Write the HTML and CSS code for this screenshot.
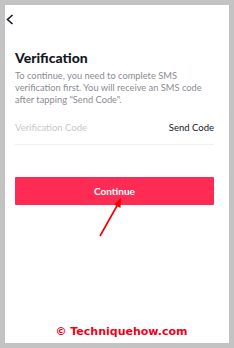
FILE: index.html
```html
<!DOCTYPE html>
<html>
<head>
<meta charset="utf-8">
<link rel="stylesheet" href="styles.css">
</head>
<body>
<div class="frame">
  <div class="screen">
    <div class="topbar">
      <svg class="back" width="8" height="11" viewBox="0 0 8 11"><path d="M6.5 1 L1.5 5.5 L6.5 10" fill="none" stroke="#161823" stroke-width="1.6"/></svg>
    </div>
    <h1 class="title">Verification</h1>
    <p class="desc">To continue, you need to complete SMS verification first. You will receive an SMS code after tapping "Send Code".</p>
    <div class="field">
      <span class="placeholder">Verification Code</span>
      <span class="send">Send Code</span>
    </div>
    <div class="btn">Continue</div>
    <svg class="arrow" width="30" height="44" viewBox="0 0 30 44">
      <line x1="4" y1="41" x2="22" y2="9" stroke="#f00000" stroke-width="1.6"/>
      <polygon points="25,3 24.5,13 18,9.5" fill="#f00000"/>
    </svg>
    <div class="spacer"></div>
    <div class="mark">© Techniquehow.com</div>
  </div>
</div>
</body>
</html>
```
FILE: styles.css
```css
html, body { margin: 0; padding: 0; }
body { width: 234px; height: 348px; background: #c3c3c3; overflow: hidden; }
.frame { padding: 5px; height: 348px; box-sizing: border-box; }
.screen { background: #fff; height: 338px; width: 224px; display: flex; flex-direction: column; position: relative; font-family: "Lato", "Liberation Sans", sans-serif; }
.topbar { height: 30px; padding: 9px 0 0 1px; box-sizing: border-box; }
.back { display: block; }
.title { margin: 15px 0 0 10px; font-weight: 900; font-size: 14px; line-height: 16px; color: #161823; letter-spacing: 0; }
.desc { margin: 4px 0 0 10px; width: 200px; font-size: 9.3px; line-height: 12px; color: #8a8b91; }
.field { margin: 16px 15px 0 10px; height: 22px; display: flex; justify-content: space-between; align-items: flex-start; border-bottom: 1px solid #efefef; font-size: 9.5px; line-height: 12px; }
.placeholder { color: #c7c8cb; }
.send { color: #161823; }
.btn { margin: 32px 15px 0 10px; height: 28px; background: #fe2c55; color: #fff; font-weight: 700; font-size: 10px; display: flex; align-items: center; justify-content: center; border-radius: 1px; }
.arrow { position: absolute; left: 91px; top: 190px; }
.spacer { flex: 1; }
.mark { text-align: center; font-family: "DejaVu Sans", sans-serif; font-weight: 700; font-size: 11px; color: #f0001a; margin: 0 0 5px 9px; line-height: 13px; }
```
